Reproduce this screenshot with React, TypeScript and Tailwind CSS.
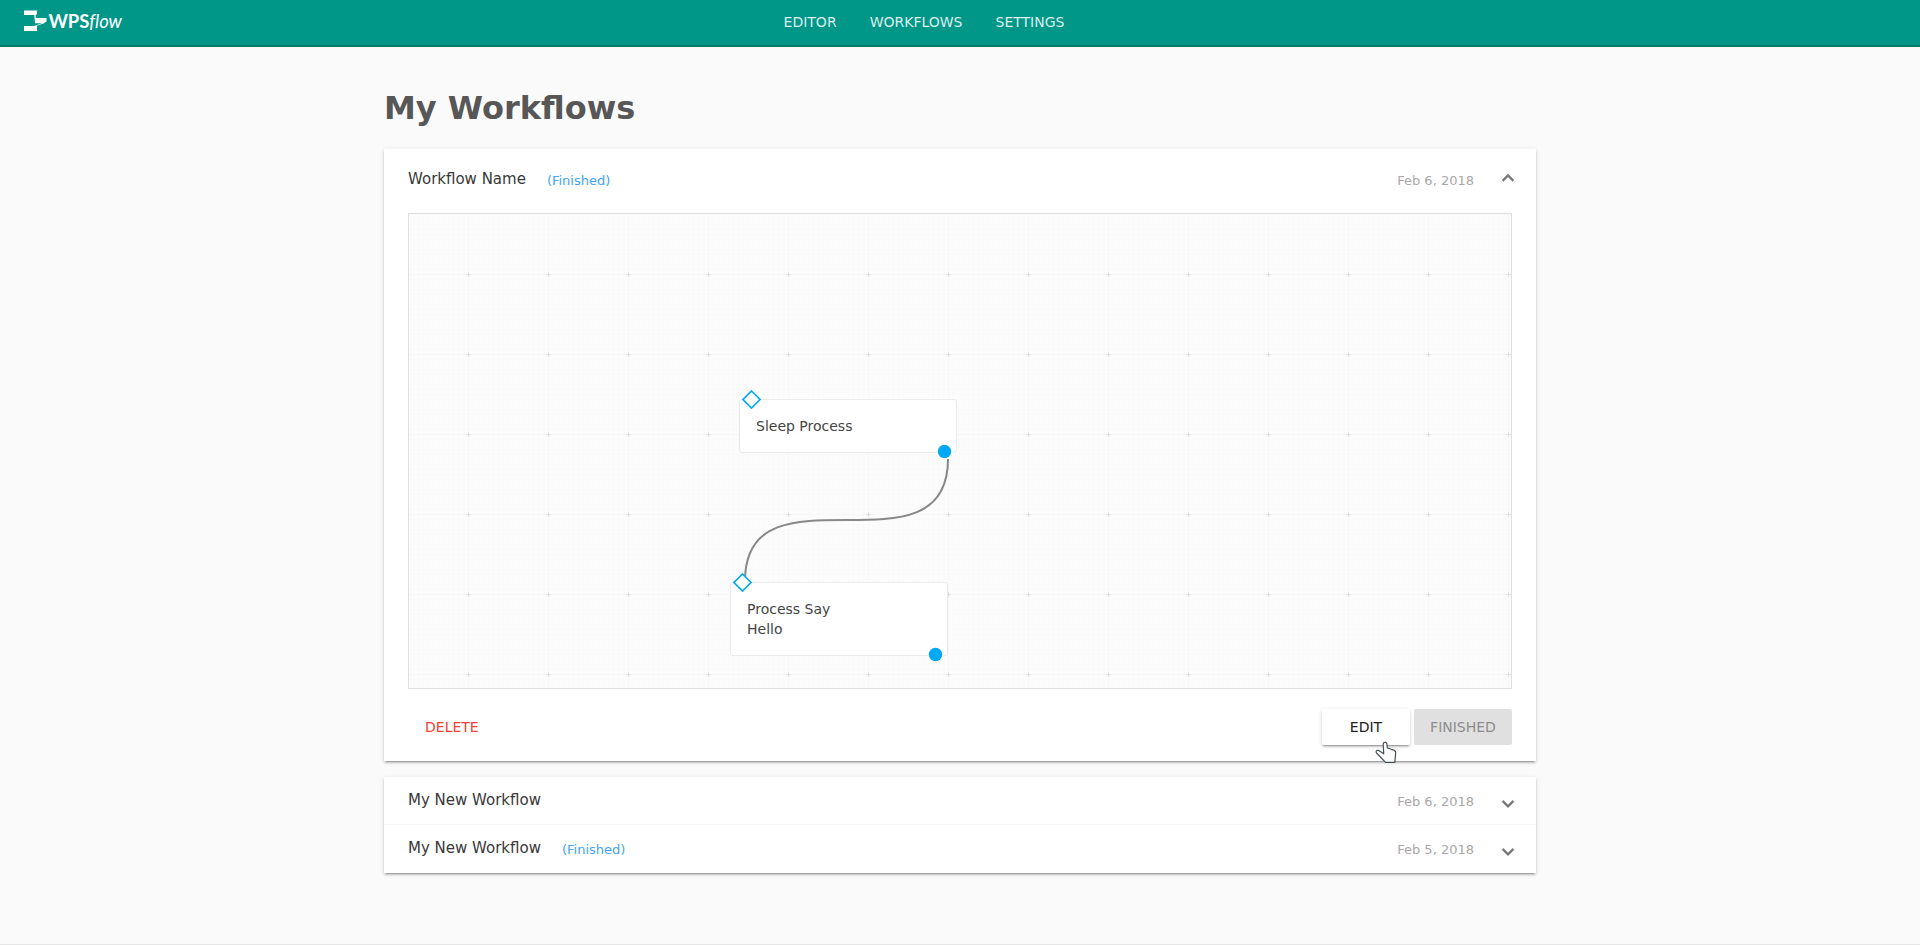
const sans = "font-['DejaVu_Sans',sans-serif]";

function Chevron({ up = false }: { up?: boolean }) {
  return (
    <svg width="24" height="24" viewBox="0 0 24 24" fill="#757575" stroke="#757575" strokeWidth="0.400">
      <path
        d={
          up
            ? 'M7.41 15.41 12 10.83l4.59 4.58L18 14l-6-6-6 6z'
            : 'M7.41 8.34 12 12.92l4.59-4.58L18 9.75l-6 6-6-6z'
        }
      />
    </svg>
  );
}

function Logo() {
  return (
    <div className="flex h-[24px] items-center text-white">
      <svg width="23" height="22" viewBox="0 0 23 22" fill="#fff">
        <path d="M0 0.500H13V4L11.700 5V8H22.500V11.500L19.500 13.500L12.500 15.800H13V21H0V16H10L18 13.200H11L10.300 5H0Z" />
      </svg>
      <span className="ml-[2px] font-['Lato',sans-serif] text-[18.5px] leading-6 font-bold tracking-[-0.1px]">
        WPS<span className="font-normal italic">flow</span>
      </span>
    </div>
  );
}

function Row({ name, finished, date, open, className }: {
  name: string;
  finished?: boolean;
  date: string;
  open?: boolean;
  className: string;
}) {
  return (
    <div className={`flex items-start pr-4 pl-6 ${className}`}>
      <span className="text-[15px] leading-6 text-[#383838]">{name}</span>
      {finished && <span className="mt-[2px] ml-[21px] text-[13px] leading-6 text-[#42a5f5]">(Finished)</span>}
      <span className="mt-[2px] mr-[22px] ml-auto text-[13px] leading-6 text-[#a8a8a8]">{date}</span>
      <span className={open ? '-mt-px' : 'mt-[4px]'}>
        <Chevron up={open} />
      </span>
    </div>
  );
}

function Canvas() {
  return (
    <div className="relative mx-6 h-[476px] border border-[#dedede] bg-[#fcfcfc]">
      <svg className="absolute inset-0" width="1102" height="474">
        <defs>
          <pattern id="fine" width="5" height="5" x="4" y="0" patternUnits="userSpaceOnUse">
            <path d="M0.500 0V5M0 0.500H5" stroke="#fafafa" fill="none" />
          </pattern>
          <pattern id="major" width="80" height="80" x="59" y="60" patternUnits="userSpaceOnUse">
            <path d="M0.500 0V80M0 0.500H80" stroke="#f7f7f7" fill="none" />
          </pattern>
          <pattern id="cross" width="80" height="80" x="19" y="20" patternUnits="userSpaceOnUse">
            <path d="M40.500 38V43M38 40.500H43" stroke="#dedede" fill="none" />
          </pattern>
        </defs>
        <rect width="1102" height="474" fill="url(#fine)" />
        <rect width="1102" height="474" fill="url(#major)" />
        <rect width="1102" height="474" fill="url(#cross)" />
        <path d="M539 245C539 367 336 245 336 367" stroke="#888" strokeWidth="2" fill="none" />
      </svg>
      <Node className="top-[185px] left-[330px] h-[54px]" label="Sleep Process" />
      <Node className="top-[368px] left-[321px] h-[74px]" label="Process Say Hello" />
    </div>
  );
}

function Node({ label, className }: { label: string; className: string }) {
  return (
    <div className={`absolute w-[218px] rounded-[3px] border border-[#ebebeb] bg-white ${className}`}>
      <p className="mt-[16px] ml-[16px] w-[110px] text-[14px] leading-5 text-[#444]">{label}</p>
      <svg className="absolute -top-[10px] left-[2px]" width="20" height="20">
        <path d="M9.500 1L18 9.500L9.500 18L1 9.500Z" fill="#fff" stroke="#03a9f4" strokeWidth="1.700" />
      </svg>
      <svg className="absolute right-[3px] -bottom-[8px]" width="17" height="17">
        <circle cx="8.500" cy="8.500" r="8.200" fill="#fdfdfd" />
        <circle cx="8.500" cy="8.500" r="6.700" fill="#03a9f4" />
      </svg>
    </div>
  );
}

const cardShadow =
  'shadow-[0_2px_2px_0_rgba(0,0,0,0.14),0_3px_1px_-2px_rgba(0,0,0,0.2),0_1px_5px_0_rgba(0,0,0,0.12)]';

export default function App() {
  return (
    <div className={`flex h-[945px] flex-col overflow-hidden border-b border-[#e6e6e6] bg-[#fafafa] ${sans}`}>
      <header className="grid h-[47px] shrink-0 grid-cols-[1fr_auto_1fr] border-b-2 border-[#00796b] bg-[#009688]">
        <div className="pt-[9px] pl-[23.5px]">
          <Logo />
        </div>
        <nav className="mr-[72px] flex gap-[33px] pt-[10px] text-[14px] leading-6 text-[#d9efed]">
          <span>EDITOR</span>
          <span>WORKFLOWS</span>
          <span>SETTINGS</span>
        </nav>
      </header>
      <main className="mx-auto flex w-[1152px] flex-col">
        <h1 className="mt-[37px] h-[65px] text-[32px] leading-[48px] font-bold text-[#575757]">My Workflows</h1>
        <section className={`h-[612px] bg-white ${cardShadow}`}>
          <Row className="h-[64px] pt-[18px]" name="Workflow Name" finished date="Feb 6, 2018" open />
          <Canvas />
          <div className="relative mx-6 mt-5 flex h-9 gap-1 text-[14px] leading-9">
            <button className="mr-auto pl-[17px] text-[#f44336]">DELETE</button>
            <button className={`w-[88px] rounded-[2px] bg-white text-[#212121] ${cardShadow}`}>EDIT</button>
            <button className="w-[98px] rounded-[2px] bg-[#e0e0e0] text-[#8d8d8d]">FINISHED</button>
            <svg className="absolute top-[32px] left-[967px]" width="22" height="24" viewBox="0 0 22 24">
              <path
                d="M8.200 3.500C8.200 0.500 11.800 0.500 12 3.300L12.300 7L14 7.300L17 8.700Q20.800 9.300 20.700 12L19.800 21.400H10.500L2 12.500C-0.500 9.500 3 8.500 5 10.200L8.700 12.800Z"
                fill="#fcfcfc"
                stroke="#455054"
                strokeWidth="1.200"
                strokeLinejoin="round"
              />
            </svg>
          </div>
        </section>
        <section className={`mt-4 h-24 bg-white ${cardShadow}`}>
          <Row className="h-12 border-b border-[#f5f5f5] pt-[11px]" name="My New Workflow" date="Feb 6, 2018" />
          <Row className="h-12 pt-[11px]" name="My New Workflow" finished date="Feb 5, 2018" />
        </section>
      </main>
    </div>
  );
}
